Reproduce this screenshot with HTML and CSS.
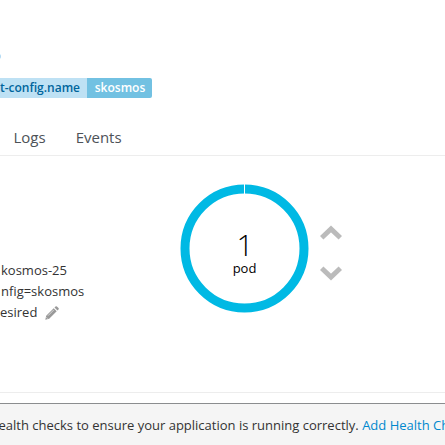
FILE: index.html
```
<!DOCTYPE html>
<html lang="en">
<head>
<meta charset="utf-8">
<title>Deployment</title>
<link rel="stylesheet" href="styles.css">
</head>
<body>
<header class="header">
  <div class="subtitle"><span class="fade">o</span></div>
  <div class="labels"><span class="label-key">t-config.name</span><span class="label-value">skosmos</span></div>
  <nav class="tabs"><a class="tab">Logs</a><a class="tab">Events</a></nav>
</header>
<main class="main">
  <div class="details">
    <div class="detail indent">kosmos-25</div>
    <div class="detail indent">nfig=skosmos</div>
    <div class="detail">esired
      <svg class="pencil" width="14" height="14" viewBox="0 0 14 14"><path d="M.3 13.7 1.2 9.8 8.7 2.3 11.7 5.3 4.2 12.8ZM9.5 1.5 10.5.5Q11.2-.1 11.9.5L13.5 2.1Q14.1 2.8 13.5 3.5L12.5 4.5Z"/><path class="shine" d="M3 9.7 8.8 3.9M1.4 11.3 2.7 12.6"/></svg>
    </div>
  </div>
  <div class="donut">
    <svg class="ring" width="130" height="130" viewBox="0 0 130 130"><circle cx="64.5" cy="65.5" r="59.5"/><path d="M64.5 0V11"/></svg>
    <div class="count">1</div>
    <div class="unit">pod</div>
  </div>
  <div class="scaling">
    <svg width="22" height="15" viewBox="0 0 22 15"><path d="M1.7 12.8 11 4 20.3 12.8"/></svg>
    <svg width="22" height="15" viewBox="0 0 22 15"><path d="M1.7 2.2 11 11 20.3 2.2"/></svg>
  </div>
</main>
<footer class="notice"><span class="message">ealth checks to ensure your application is running correctly.</span> <a class="link">Add Health Checks</a></footer>
</body>
</html>
```
FILE: styles.css
```
* { box-sizing: border-box; }
body {
  margin: 0;
  width: 445px;
  height: 445px;
  overflow: hidden;
  display: flex;
  flex-direction: column;
  background: #fff;
  color: #4d5258;
  font: 13px/21px "Open Sans", sans-serif;
}
.header { height: 156px; border-bottom: 1px solid #ededed; padding-top: 45px; }
.subtitle { height: 33px; width: 1px; overflow: hidden; display: flex; justify-content: flex-end; color: #9c9c9c; }
.labels { display: flex; height: 20px; font-size: 12px; line-height: 19px; font-weight: 600; white-space: nowrap; }
.label-key { width: 87px; padding-right: 7px; display: flex; justify-content: flex-end; overflow: hidden; background: #bee1f4; color: #00659c; }
.label-value { width: 65px; padding-left: 1px; text-align: center; background: #72c1e2; color: #fff; border-radius: 0 2px 2px 0; }
.tabs { display: flex; gap: 30px; padding: 29px 0 0 13.5px; font-size: 15px; }
.main { height: 237px; display: flex; border-bottom: 1px solid #ededed; color: #333; }
.details { width: 180px; padding-top: 104px; }
.detail { display: flex; align-items: center; height: 21px; white-space: nowrap; }
.indent { padding-left: 1px; }
.pencil { margin-left: 8px; fill: #999; }
.shine { fill: none; stroke: #fff; stroke-width: .6; }
.donut { display: grid; grid-template-rows: 75px 22px 33px; width: 130px; height: 130px; margin-top: 27px; text-align: center; color: #000; }
.ring { grid-area: 1 / 1 / 4 / 2; }
.ring circle { fill: none; stroke: #00b9e4; stroke-width: 9; }
.ring path { stroke: #fff; stroke-width: 1; }
.count { grid-area: 1 / 1; padding-top: 44px; font-size: 30px; line-height: 36px; font-weight: 300; }
.unit { grid-area: 2 / 1; padding-right: 1px; }
.scaling { display: flex; flex-direction: column; gap: 26px; padding: 69px 0 0 10px; }
.scaling path { fill: none; stroke: #bbb; stroke-width: 5; }
.notice { height: 42px; margin-top: 10px; padding-top: 11px; border-top: 1px solid #8b8d8f; background: #f5f5f5; color: #333; white-space: nowrap; overflow: hidden; }
.message { margin-left: -1.5px; }
.link { color: #0088ce; }
```
